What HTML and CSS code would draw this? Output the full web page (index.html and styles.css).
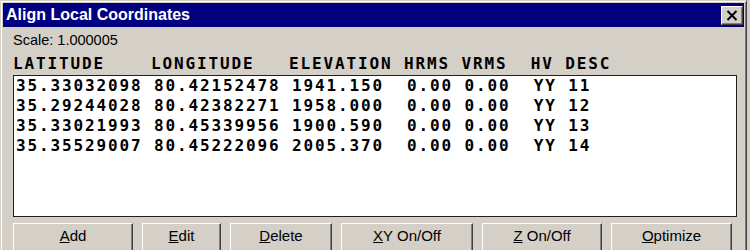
FILE: index.html
```html
<!DOCTYPE html>
<html>
<head>
<meta charset="utf-8">
<link rel="stylesheet" href="styles.css">
</head>
<body>
<div class="window">
  <div class="titlebar">
    <span class="title">Align Local Coordinates</span>
    <span class="close"><svg width="12" height="11" viewBox="0 0 12 11"><path d="M1.5 1 L10.5 10 M10.5 1 L1.5 10" stroke="#000" stroke-width="2" fill="none"/></svg></span>
  </div>
  <div class="content">
    <div class="scale">Scale: 1.000005</div>
    <pre class="header">LATITUDE    LONGITUDE   ELEVATION HRMS VRMS  HV DESC</pre>
    <div class="list"><pre class="rows">35.33032098 80.42152478 1941.150  0.00 0.00  YY 11
35.29244028 80.42382271 1958.000  0.00 0.00  YY 12
35.33021993 80.45339956 1900.590  0.00 0.00  YY 13
35.35529007 80.45222096 2005.370  0.00 0.00  YY 14</pre></div>
    <div class="buttons">
      <button class="btn w-add"><u>A</u>dd</button>
      <button class="btn w-edit"><u>E</u>dit</button>
      <button class="btn w-delete"><u>D</u>elete</button>
      <button class="btn w-xy"><u>X</u>Y On/Off</button>
      <button class="btn w-z"><u>Z</u> On/Off</button>
      <button class="btn w-opt"><u>O</u>ptimize</button>
    </div>
  </div>
</div>
</body>
</html>
```
FILE: styles.css
```css
html, body {
  margin: 0;
  padding: 0;
  background: #d4d0c8;
  overflow: hidden;
}
.window {
  width: 747px;
  height: 270px;
  box-sizing: border-box;
  background: #d4d0c8;
  border: 1px solid;
  border-color: #d4d0c8 #404040 #404040 #d4d0c8;
  box-shadow: inset 1px 1px #fff, inset -1px -1px #808080;
  padding: 2px;
  display: flex;
  flex-direction: column;
}
.titlebar {
  height: 24px;
  background: #000080;
  display: flex;
  align-items: center;
  justify-content: space-between;
  padding-left: 3px;
}
.title {
  color: #fff;
  font-family: "Liberation Sans", Arial, sans-serif;
  font-weight: bold;
  font-size: 16px;
  line-height: 24px;
}
.close {
  width: 22px;
  height: 19px;
  box-sizing: border-box;
  margin-right: 1px;
  background: #d4d0c8;
  border: 1px solid;
  border-color: #fff #404040 #404040 #fff;
  box-shadow: inset -1px -1px #808080;
  display: flex;
  align-items: center;
  justify-content: center;
}
.close svg { display: block; }
.content {
  padding: 0 7px 0 10px;
  display: flex;
  flex-direction: column;
}
.scale {
  margin-top: 4px;
  font-family: "Liberation Sans", Arial, sans-serif;
  font-size: 14.5px;
  line-height: 18px;
  color: #000;
}
.header, .rows {
  margin: 0;
  font-family: "DejaVu Sans Mono", monospace;
  font-weight: bold;
  font-size: 16px;
  line-height: 20px;
  letter-spacing: 1.87px;
  color: #000;
}
.header {
  margin-top: 5px;
}
.list {
  margin-top: 1px;
  height: 142px;
  box-sizing: border-box;
  background: #fff;
  border: 1px solid #202020;
  padding-left: 2px;
}
.buttons {
  margin-top: 6px;
  display: flex;
  gap: 9px;
}
.btn {
  height: 30px;
  box-sizing: border-box;
  background: #d4d0c8;
  border: 1px solid;
  border-color: #fff #404040 #404040 #fff;
  box-shadow: inset -1px -1px #808080;
  font-family: "Liberation Sans", Arial, sans-serif;
  font-size: 15px;
  color: #000;
  padding: 0 0 6px 0;
  margin: 0;
}
.w-add { width: 120px; }
.w-edit { width: 79px; }
.w-delete { width: 102px; }
.w-xy { width: 132px; }
.w-z { width: 120px; }
.w-opt { width: 121px; }
```
